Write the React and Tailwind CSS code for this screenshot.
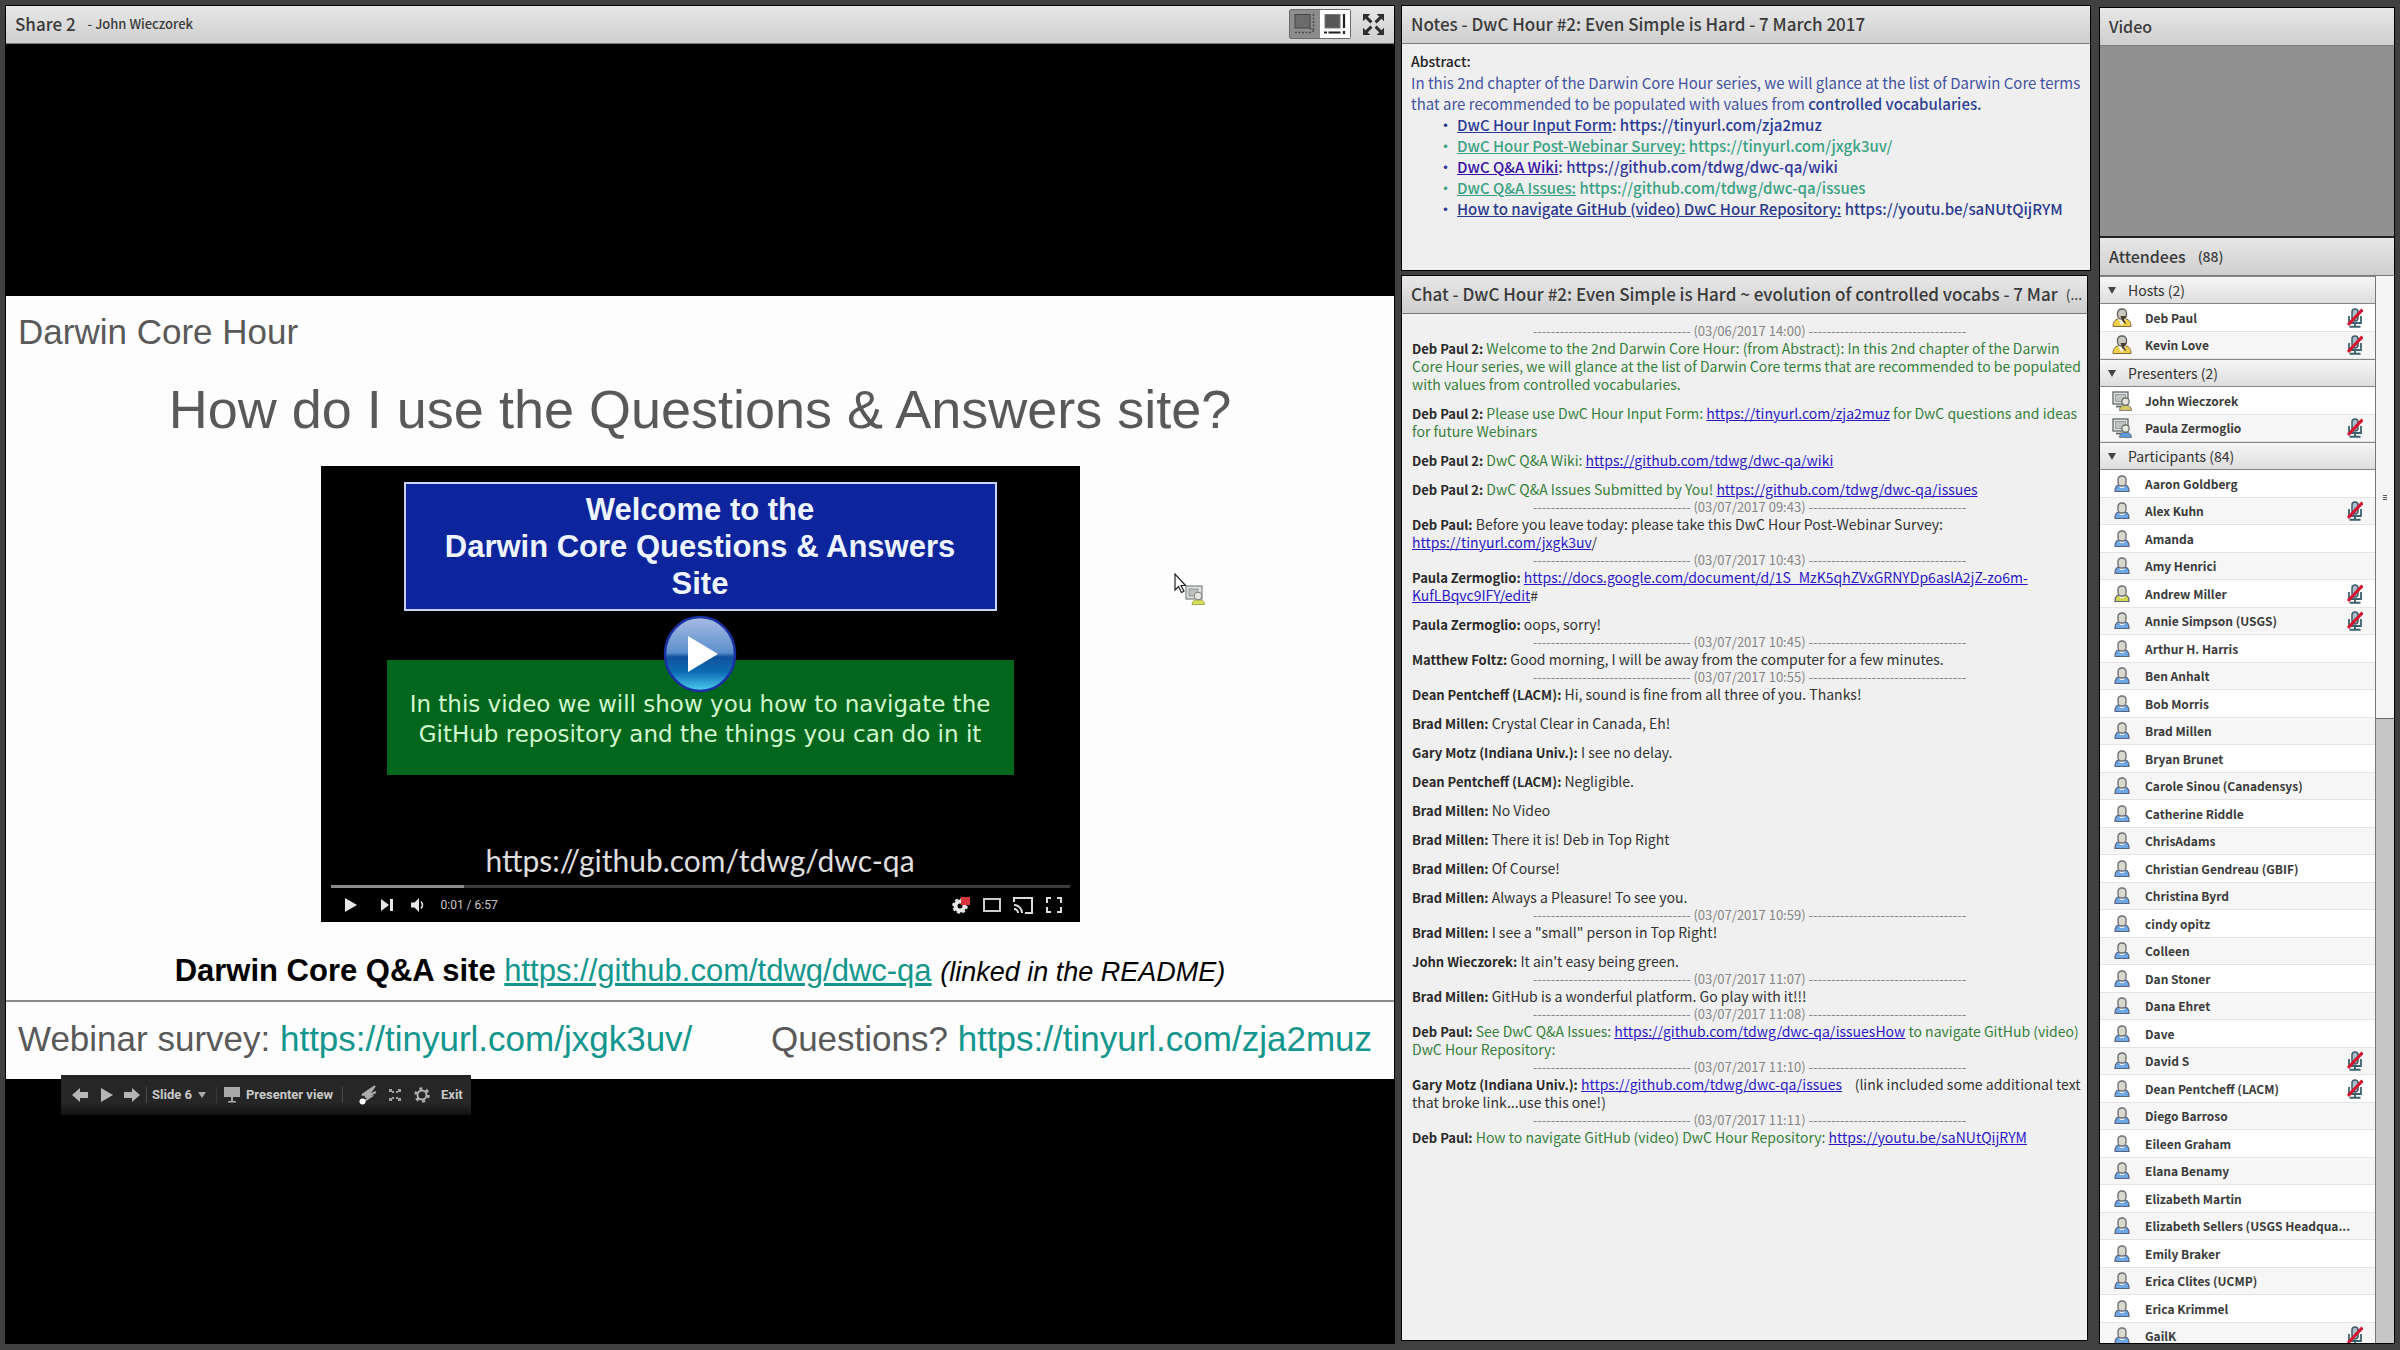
import React from 'react';

const hosts = [
    { name: 'Deb Paul', muted: true },
    { name: 'Kevin Love', muted: true },
];

const presenters = [
    { name: 'John Wieczorek', body: '#d9c86a' },
    { name: 'Paula Zermoglio', muted: true },
];

const participants = [
    { name: 'Aaron Goldberg' },
    { name: 'Alex Kuhn', muted: true },
    { name: 'Amanda' },
    { name: 'Amy Henrici' },
    { name: 'Andrew Miller', muted: true, body: '#d8d84e' },
    { name: 'Annie Simpson (USGS)', muted: true },
    { name: 'Arthur H. Harris' },
    { name: 'Ben Anhalt' },
    { name: 'Bob Morris' },
    { name: 'Brad Millen' },
    { name: 'Bryan Brunet' },
    { name: 'Carole Sinou (Canadensys)' },
    { name: 'Catherine Riddle' },
    { name: 'ChrisAdams' },
    { name: 'Christian Gendreau (GBIF)' },
    { name: 'Christina Byrd' },
    { name: 'cindy opitz' },
    { name: 'Colleen' },
    { name: 'Dan Stoner' },
    { name: 'Dana Ehret' },
    { name: 'Dave' },
    { name: 'David S', muted: true },
    { name: 'Dean Pentcheff (LACM)', muted: true },
    { name: 'Diego Barroso' },
    { name: 'Eileen Graham' },
    { name: 'Elana Benamy' },
    { name: 'Elizabeth Martin' },
    { name: 'Elizabeth Sellers (USGS Headqua...' },
    { name: 'Emily Braker' },
    { name: 'Erica Clites (UCMP)' },
    { name: 'Erica Krimmel' },
    { name: 'GailK', muted: true },
];

const notes = [
    { label: 'DwC Hour Input Form', after: ':', url: 'https://tinyurl.com/zja2muz', tone: 'text-[#2a3b96]' },
    { label: 'DwC Hour Post-Webinar Survey:', url: 'https://tinyurl.com/jxgk3uv/', tone: 'text-[#3aa283]' },
    { label: 'DwC Q&A Wiki', after: ':', url: 'https://github.com/tdwg/dwc-qa/wiki', tone: 'text-[#33379c]', linkTone: 'text-[#3a14a6]' },
    { label: 'DwC Q&A Issues:', url: 'https://github.com/tdwg/dwc-qa/issues', tone: 'text-[#3aa283]' },
    { label: 'How to navigate GitHub (video) DwC Hour Repository:', url: 'https://youtu.be/saNUtQijRYM', tone: 'text-[#2c3a8e]' },
];

const ChatLink = ({ children, wrap = false }) => (
    <a href={children} className={`text-[#2a18c8] underline ${wrap ? '' : 'whitespace-nowrap'}`}>{children}</a>
);

const chat = [
    {
        time: '03/06/2017 14:00',
        messages: [
            { from: 'Deb Paul 2', green: true, text: 'Welcome to the 2nd Darwin Core Hour: (from Abstract): In this 2nd chapter of the Darwin Core Hour series, we will glance at the list of Darwin Core terms that are recommended to be populated with values from controlled vocabularies.' },
            { from: 'Deb Paul 2', green: true, text: <>Please use DwC Hour Input Form: <ChatLink>https://tinyurl.com/zja2muz</ChatLink> for DwC questions and ideas for future Webinars</> },
            { from: 'Deb Paul 2', green: true, text: <>DwC Q&amp;A Wiki: <ChatLink>https://github.com/tdwg/dwc-qa/wiki</ChatLink></> },
            { from: 'Deb Paul 2', green: true, text: <>DwC Q&amp;A Issues Submitted by You! <ChatLink>https://github.com/tdwg/dwc-qa/issues</ChatLink></> },
        ],
    },
    {
        time: '03/07/2017 09:43',
        messages: [
            { from: 'Deb Paul', text: <>Before you leave today: please take this DwC Hour Post-Webinar Survey: <ChatLink>https://tinyurl.com/jxgk3uv</ChatLink>/</> },
        ],
    },
    {
        time: '03/07/2017 10:43',
        messages: [
            { from: 'Paula Zermoglio', text: <><ChatLink wrap>https://docs.google.com/document/d/1S_MzK5qhZVxGRNYDp6aslA2jZ-zo6m-KufLBqvc9IFY/edit</ChatLink>#</> },
            { from: 'Paula Zermoglio', text: 'oops, sorry!' },
        ],
    },
    {
        time: '03/07/2017 10:45',
        messages: [{ from: 'Matthew Foltz', text: 'Good morning, I will be away from the computer for a few minutes.' }],
    },
    {
        time: '03/07/2017 10:55',
        messages: [
            { from: 'Dean Pentcheff (LACM)', text: 'Hi, sound is fine from all three of you. Thanks!' },
            { from: 'Brad Millen', text: 'Crystal Clear in Canada, Eh!' },
            { from: 'Gary Motz (Indiana Univ.)', text: 'I see no delay.' },
            { from: 'Dean Pentcheff (LACM)', text: 'Negligible.' },
            { from: 'Brad Millen', text: 'No Video' },
            { from: 'Brad Millen', text: 'There it is! Deb in Top Right' },
            { from: 'Brad Millen', text: 'Of Course!' },
            { from: 'Brad Millen', text: 'Always a Pleasure! To see you.' },
        ],
    },
    {
        time: '03/07/2017 10:59',
        messages: [
            { from: 'Brad Millen', text: 'I see a "small" person in Top Right!' },
            { from: 'John Wieczorek', text: "It ain't easy being green." },
        ],
    },
    {
        time: '03/07/2017 11:07',
        messages: [{ from: 'Brad Millen', text: 'GitHub is a wonderful platform. Go play with it!!!' }],
    },
    {
        time: '03/07/2017 11:08',
        messages: [
            { from: 'Deb Paul', green: true, text: <>See DwC Q&amp;A Issues: <ChatLink>https://github.com/tdwg/dwc-qa/issuesHow</ChatLink> to navigate GitHub (video) DwC Hour Repository:</> },
        ],
    },
    {
        time: '03/07/2017 11:10',
        messages: [
            { from: 'Gary Motz (Indiana Univ.)', text: <><ChatLink>https://github.com/tdwg/dwc-qa/issues</ChatLink> &nbsp;&nbsp; (link included some additional text that broke link...use this one!)</> },
        ],
    },
    {
        time: '03/07/2017 11:11',
        messages: [
            { from: 'Deb Paul', green: true, text: <>How to navigate GitHub (video) DwC Hour Repository: <ChatLink>https://youtu.be/saNUtQijRYM</ChatLink></> },
        ],
    },
];

const dashes = '-'.repeat(35);

/* ---------- icons ---------- */

const PersonIcon = ({ body = '#6fa8e6' }) => (
    <svg viewBox="0 0 16 18" className="h-[18px] w-4">
        <path d="M1 16.5c0-4 1.5-6 3.6-6.4h6.8c2.1.4 3.6 2.4 3.6 6.4z" fill={body} stroke="#56627e" strokeWidth="1.2" />
        <path d="M5 9.5h6l-1 3.5H6z" fill="#e8eef4" />
        <rect x="4" y="1" width="8" height="10" rx="3.6" fill="#d8d8cc" stroke="#6d6a72" strokeWidth="1.3" />
    </svg>
);

const HostIcon = () => (
    <svg viewBox="0 0 20 20" className="h-5 w-5">
        <path d="M1 18.5c0-4.5 2-7 5-7.5h8c3 .5 5 3 5 7.5z" fill="#f0cf4a" stroke="#7c6a3c" />
        <path d="M6 11l3.5 7 4.5-7z" fill="#f4f0e4" />
        <rect x="5.5" y="1" width="9" height="10" rx="4" fill="#c9c7be" stroke="#5f5d5c" strokeWidth="1.3" />
        <path d="M8.5 8h6l-2.5 3.5 2.5 5-4-3z" fill="#4c3c2c" />
    </svg>
);

const PresenterIcon = ({ body = '#5c97e0' }) => (
    <svg viewBox="0 0 20 20" className="h-5 w-5">
        <rect x="1" y="1" width="15" height="12" fill="#e4e6e4" stroke="#5f6668" strokeWidth="1.3" />
        <rect x="3.5" y="3.5" width="10" height="7" fill="#bfc5c4" stroke="#8b9190" strokeWidth=".8" />
        <path d="M4 15.5h6" stroke="#5f6668" strokeWidth="1.8" />
        <path d="M7.5 19.5c0-3 1.5-4.5 3.5-5h5c2 .5 3.5 2 3.5 5z" fill={body} stroke="#6a705e" strokeWidth=".8" />
        <circle cx="13.5" cy="10.5" r="3.7" fill="#e6e8dc" stroke="#5f645c" strokeWidth="1.2" />
    </svg>
);

const MutedMicIcon = () => (
    <svg viewBox="0 0 16 20" className="h-5 w-4" aria-label="Microphone muted">
        <rect x="5" y="1" width="6" height="12" rx="3" fill="#a9bfca" stroke="#3f5c68" strokeWidth="1.5" />
        <path d="M2 8v7h12V8" fill="none" stroke="#3c626e" strokeWidth="1.8" />
        <path d="M8 15v3.5M2.5 18.8h11" stroke="#3c626e" strokeWidth="1.9" />
        <path d="M1 17L15.5 1.5" stroke="#d3152f" strokeWidth="3.2" />
    </svg>
);

const FitIcon = ({ dark }) => (
    <svg viewBox="0 0 24 22" className="h-[22px] w-6">
        <rect x="2" y="1.5" width="15" height="13.5" fill={dark ? '#6c6c6c' : '#575757'} stroke={dark ? '#444' : '#777'} />
        {dark
            ? <path d="M20.5 1v17M17 15l4 4M2 19.5h16" stroke="#4a4a4a" strokeWidth="1.5" strokeDasharray="2 1.5" />
            : <path d="M21 1v14M21 18v3M1 19.5h3M5.5 19.5h12" stroke="#222" strokeWidth="2.2" />}
    </svg>
);

const FullscreenIcon = () => (
    <svg viewBox="0 0 20 20" className="h-[21px] w-[21px]" fill="#2e2e2e" stroke="#2e2e2e" strokeWidth="2.8">
        <path d="M3 3l5 5M17 3l-5 5M3 17l5-5M17 17l-5-5" />
        <path d="M0 0h7L0 7zM20 0h-7l7 7zM0 20h7l-7-7zM20 20h-7l7-7z" stroke="none" />
    </svg>
);

const PlayBadge = () => (
    <svg viewBox="0 0 74 78" className="h-[78px] w-[74px]">
        <defs>
            <linearGradient id="orbTop" x1="0" y1="0" x2="0" y2="1">
                <stop offset="0%" stopColor="#a9bbe4" />
                <stop offset="48%" stopColor="#5c8fcb" />
                <stop offset="54%" stopColor="#12519c" />
                <stop offset="75%" stopColor="#0d6db4" />
                <stop offset="100%" stopColor="#4fd0f2" />
            </linearGradient>
        </defs>
        <ellipse cx="37" cy="39" rx="35" ry="37" fill="url(#orbTop)" stroke="#1a2fa0" strokeWidth="2.5" />
        <path d="M25 21v36l30-18z" fill="#fff" />
    </svg>
);

const PointerIcon = () => (
    <svg viewBox="0 0 32 34" className="h-[34px] w-8">
        <path d="M1 1v16l3.5-3.5 3 6 2.5-1.2-3-5.8h4.5z" fill="#fff" stroke="#222" strokeWidth="1.2" />
        <rect x="12" y="13" width="16" height="13" fill="#dfe1df" stroke="#6a6e70" />
        <rect x="15" y="16" width="9" height="7" fill="#bcc1c0" stroke="#85898a" strokeWidth=".8" />
        <path d="M18 31.5c0-3 2-4 3.5-4.5h5.5c2 .5 3.5 1.5 3.5 4.5z" fill="#dbe05a" stroke="#8f9446" strokeWidth=".8" />
        <circle cx="24" cy="23" r="3.8" fill="#e8e8e4" stroke="#7b7e7b" />
    </svg>
);

/* ---------- shared pod parts ---------- */

const PodHeader = ({ title, size = 'text-[17px]', children }) => (
    <header className="flex h-[38px] shrink-0 items-center border-b border-[#7a7a7a] bg-linear-to-b from-[#e8e8e8] to-[#cecece] pr-[10px] pb-px pl-[9px] leading-6 text-[#3a3a3a]">
        <h2 className={`font-medium whitespace-nowrap ${size} leading-6`}>{title}</h2>
        {children}
    </header>
);

const VideoFrame = () => (
    <div className="relative mx-auto mt-[26px] flex h-[456px] w-[759px] flex-col items-center bg-black pt-4">
        <div className="w-[593px] border-2 border-[#c9d2ff] bg-[#0c259c] pt-[7px] pb-[7px] text-center text-[31px] leading-[37px] font-bold text-[#eef4ff]">
            Welcome to the<br />Darwin Core Questions &amp; Answers<br />Site
        </div>
        <div className="mt-[49px] h-[115px] w-[627px] bg-[#02671d] pt-[29px] text-center font-['DejaVu_Sans',sans-serif] text-[23px] leading-[30px] text-[#d2f7cf]">
            In this video we will show you how to navigate the<br />GitHub repository and the things you can do in it
        </div>
        <button type="button" aria-label="Play video" className="absolute top-[149px] left-1/2 -translate-x-1/2"><PlayBadge /></button>
        <p className="mt-[67px] font-[Lato,sans-serif] text-[30px] leading-9 text-[#dedede]">https://github.com/tdwg/dwc-qa</p>
        <div className="mt-[7px] h-[3px] w-[739px] bg-[#3c3c3c]">
            <div className="h-full w-[18%] bg-[#8b8b8b]" />
        </div>
        <div className="flex w-full flex-1 items-center pr-[18px] pl-6 text-[#e6e6e6]">
            <button type="button" aria-label="Play"><svg viewBox="0 0 12 14" className="h-[14px] w-3" fill="currentColor"><path d="M0 0v14l12-7z" /></svg></button>
            <button type="button" aria-label="Next" className="ml-6"><svg viewBox="0 0 12 12" className="h-3 w-3" fill="currentColor"><path d="M0 0v12l8-6zM9 0h3v12H9z" /></svg></button>
            <button type="button" aria-label="Volume" className="ml-[18px]">
                <svg viewBox="0 0 14 14" className="h-[14px] w-[14px]" fill="currentColor"><path d="M0 4.5h3.5L8 0v14L3.5 9.5H0z" /><path d="M10 3.5q3 3.5 0 7" fill="none" stroke="currentColor" strokeWidth="1.5" /></svg>
            </button>
            <span className="ml-4 font-[Roboto,sans-serif] text-xs text-[#c8c8c8]">0:01 / 6:57</span>
            <button type="button" aria-label="Settings" className="ml-auto">
                <svg viewBox="0 0 18 18" className="h-[18px] w-[18px]">
                    <circle cx="8" cy="10" r="4.5" fill="none" stroke="#e6e6e6" strokeWidth="4" />
                    <circle cx="8" cy="10" r="6.8" fill="none" stroke="#e6e6e6" strokeWidth="2" strokeDasharray="3 2.34" />
                    <rect x="9" y="1" width="9" height="8" fill="#d7333b" />
                </svg>
            </button>
            <button type="button" aria-label="Theater mode" className="ml-[13px]"><svg viewBox="0 0 18 14" className="h-[14px] w-[18px]"><rect x="1" y="1" width="16" height="12" fill="none" stroke="#ccc" strokeWidth="2" /></svg></button>
            <button type="button" aria-label="Cast" className="ml-3">
                <svg viewBox="0 0 20 17" className="h-[17px] w-5" fill="none" stroke="#ddd" strokeWidth="2"><path d="M1 5V1h18v15h-7M1 8a8 8 0 018 8M1 12a4 4 0 014 4" /></svg>
            </button>
            <button type="button" aria-label="Full screen" className="ml-[13px]"><svg viewBox="0 0 16 16" className="h-4 w-4" fill="none" stroke="#ddd" strokeWidth="2"><path d="M1 6V1h4M11 1h4v5M15 10v5h-4M5 15H1v-5" /></svg></button>
        </div>
    </div>
);

const SlideToolbar = () => (
    <nav className="relative -mt-1 ml-[55px] flex h-10 w-fit items-center bg-linear-to-b from-[#262626] from-70% to-[#111] pr-2 pl-[11px] font-[Roboto,sans-serif] text-[13px] font-bold text-[#c9c9c9]">
        <button type="button" aria-label="Previous slide"><svg viewBox="0 0 16 14" className="h-[14px] w-4" fill="#b5b5b5"><path d="M0 7l8-7v4h8v6H8v4z" /></svg></button>
        <button type="button" aria-label="Play" className="ml-[13px]"><svg viewBox="0 0 12 14" className="h-[14px] w-3" fill="#b5b5b5"><path d="M0 0v14l12-7z" /></svg></button>
        <button type="button" aria-label="Next slide" className="ml-[11px]"><svg viewBox="0 0 16 14" className="h-[14px] w-4" fill="#b5b5b5"><path d="M16 7L8 0v4H0v6h8v4z" /></svg></button>
        <span className="ml-[6px] h-4 w-px bg-[#4a4a4a]" />
        <button type="button" className="ml-[5px] flex items-center gap-[6px]">
            Slide 6
            <svg viewBox="0 0 8 6" className="h-[6px] w-2" fill="#aaa"><path d="M0 0h8L4 6z" /></svg>
        </button>
        <span className="ml-[10px] h-4 w-px bg-[#3a3a3a]" />
        <button type="button" className="ml-[7px] flex items-center gap-[6px]">
            <svg viewBox="0 0 16 16" className="h-4 w-4" fill="#a9a9a9"><path d="M0 0h16v10H0zM7 10h2v4H7zM4 14h8v1.5H4z" /></svg>
            Presenter view
        </button>
        <span className="ml-[9px] h-4 w-px bg-[#4a4a4a]" />
        <button type="button" aria-label="Laser pointer" className="ml-4">
            <svg viewBox="0 0 18 20" className="h-5 w-[18px]"><path d="M16 1L3 10l7-1zM17 7L6 12l6-.5L4 17" fill="#aaa" stroke="#aaa" strokeWidth="2" /><circle cx="3.5" cy="16.5" r="3" fill="#fff" /></svg>
        </button>
        <button type="button" aria-label="Exit full screen" className="ml-3">
            <svg viewBox="0 0 12 12" className="h-3 w-3" fill="#a2a2a2"><path d="M0 0h3v3H0zM3 2h2v2H3zM9 0h3v3H9zM7 2h2v2H7zM0 9h3v3H0zM3 8h2v2H3zM9 9h3v3H9zM7 8h2v2H7z" /></svg>
        </button>
        <button type="button" aria-label="Slide options" className="ml-[13px]">
            <svg viewBox="0 0 16 16" className="h-4 w-4" fill="none" stroke="#b0b0b0"><circle cx="8" cy="8" r="4.5" strokeWidth="2" /><circle cx="8" cy="8" r="6.5" strokeWidth="2.5" strokeDasharray="3 3.8" /></svg>
        </button>
        <button type="button" className="ml-[11px]">Exit</button>
    </nav>
);

const SharePod = () => (
    <section className="flex min-w-0 flex-col overflow-hidden bg-black outline outline-black">
        <PodHeader title="Share 2">
            <span className="ml-3 text-[13px] font-medium">- John Wieczorek</span>
            <div className="ml-auto flex rounded-[2px] border border-[#6a6a6a]">
                <button type="button" aria-label="Fit to window" className="flex h-7 w-[30px] items-center justify-center bg-[#8d8d8d]"><FitIcon dark /></button>
                <button type="button" aria-label="Actual size" className="flex h-7 w-[30px] items-center justify-center bg-white"><FitIcon /></button>
            </div>
            <button type="button" aria-label="Full screen" className="ml-3"><FullscreenIcon /></button>
        </PodHeader>
        <div className="flex-[252]" />
        <article className="relative bg-[#fdfdfd] font-['Liberation_Sans',sans-serif] text-[#595959]">
            <p className="pt-4 pl-3 text-[35px] leading-10">Darwin Core Hour</p>
            <h1 className="mt-[26px] text-center text-[54px] leading-[62px]">How do I use the Questions &amp; Answers site?</h1>
            <VideoFrame />
            <p className="mt-[31px] text-center text-[31px] leading-9 text-black">
                <b>Darwin Core Q&amp;A site</b>{' '}
                <a href="https://github.com/tdwg/dwc-qa" className="text-[#12968d] underline">https://github.com/tdwg/dwc-qa</a>{' '}
                <i className="text-[27px]">(linked in the README)</i>
            </p>
            <footer className="mt-[10px] flex justify-between border-t-2 border-[#8a8a8a] pt-[17px] pr-[22px] pb-5 pl-3 text-[35px] leading-10">
                <span>Webinar survey: <a href="https://tinyurl.com/jxgk3uv/" className="text-[#12968d]">https://tinyurl.com/jxgk3uv/</a></span>
                <span>Questions? <a href="https://tinyurl.com/zja2muz" className="text-[#12968d]">https://tinyurl.com/zja2muz</a></span>
            </footer>
            <span className="absolute top-[277px] left-[1168px]"><PointerIcon /></span>
        </article>
        <div className="flex-[264]"><SlideToolbar /></div>
    </section>
);

const NotesPod = () => (
    <section className="h-[264px] shrink-0 overflow-hidden bg-[#efefef] outline outline-black">
        <PodHeader title="Notes - DwC Hour #2: Even Simple is Hard - 7 March 2017" />
        <div className="pt-[7px] pl-[9px] text-[15px] leading-[21px] text-[#4453a2]">
            <p className="text-sm leading-[21px] font-medium text-[#222]">Abstract:</p>
            <p>In this 2nd chapter of the Darwin Core Hour series, we will glance at the list of Darwin Core terms that are recommended to be populated with values from <b className="font-medium text-[#2c3f94]">controlled vocabularies.</b></p>
            <ul className="pl-[27px] font-medium whitespace-nowrap">
                {notes.map((n) => (
                    <li key={n.url} className={`before:inline-block before:w-[19px] before:leading-none before:content-['•'] ${n.tone}`}>
                        <a href={n.url} className={`underline ${n.linkTone || ''}`}>{n.label}</a>{n.after} {n.url}
                    </li>
                ))}
            </ul>
        </div>
    </section>
);

const ChatPod = () => (
    <section className="mr-[3px] mb-[3px] flex min-h-0 flex-1 flex-col overflow-hidden bg-[#f0f0f0] outline outline-black">
        <PodHeader title="Chat - DwC Hour #2: Even Simple is Hard ~ evolution of controlled vocabs - 7 Mar">
            <span className="ml-2 text-sm">(...</span>
        </PodHeader>
        <div className="pt-2 pl-[10px] text-sm leading-[18px] text-[#333]">
            {chat.map((group) => (
                <div key={group.time}>
                    <p className="text-center text-[13px] leading-[17px] whitespace-nowrap text-[#858585]">{dashes} ({group.time}) {dashes}</p>
                    <ul className="flex flex-col gap-[11px] pr-1">
                        {group.messages.map((m, i) => (
                            <li key={i} className={m.green ? 'text-[#37803c]' : ''}>
                                <b className="text-[13px] leading-none text-[#2a2a2a]">{m.from}:</b> {m.text}
                            </li>
                        ))}
                    </ul>
                </div>
            ))}
        </div>
    </section>
);

const AttendeeGroup = ({ label, count, people, Icon }) => (
    <section>
        <button type="button" className="flex h-7 w-full items-center gap-3 border-y border-[#858585] bg-linear-to-b from-[#f6f6f6] to-[#dedede] pl-2 text-sm text-[#333]">
            <svg viewBox="0 0 8 7" className="h-[7px] w-2" fill="#444"><path d="M0 0h8L4 7z" /></svg>
            {label} ({count})
        </button>
        <ul>
            {people.map((p) => (
                <li key={p.name} className="flex h-7 items-center border-b border-[#e4e4e4] pr-3 pl-3 text-xs font-bold text-[#3a3a3a] odd:bg-white even:h-[27px] even:bg-[#f6f6f6]">
                    <span className="flex w-5 justify-center"><Icon body={p.body} /></span>
                    <span className="ml-[13px] flex-1 whitespace-nowrap">{p.name}</span>
                    {p.muted && <MutedMicIcon />}
                </li>
            ))}
        </ul>
    </section>
);

export default function App() {
    return (
        <main className="grid h-screen grid-cols-[1388fr_688fr_296fr] gap-x-2 overflow-hidden bg-[#404040] px-[6px] pt-[6px] pb-[7px] font-['Noto_Sans_CJK_SC','Open_Sans',sans-serif]">
            <SharePod />
            <div className="flex min-h-0 min-w-0 flex-col gap-[6px]">
                <NotesPod />
                <ChatPod />
            </div>
            <div className="mt-[2px] ml-[2px] flex min-h-0 min-w-0 flex-col gap-[2px] bg-[#222] outline outline-black">
                <section>
                    <PodHeader title="Video" size="text-base" />
                    <div className="h-[190px] bg-[#919191]" />
                </section>
                <section className="flex min-h-0 flex-1 flex-col bg-white">
                    <PodHeader title="Attendees" size="text-base"><span className="ml-3 text-sm font-medium">(88)</span></PodHeader>
                    <div className="flex min-h-0 flex-1">
                        <div className="min-w-0 flex-1 overflow-hidden">
                            <AttendeeGroup label="Hosts" count={2} people={hosts} Icon={HostIcon} />
                            <AttendeeGroup label="Presenters" count={2} people={presenters} Icon={PresenterIcon} />
                            <AttendeeGroup label="Participants" count={84} people={participants} Icon={PersonIcon} />
                        </div>
                        {/* scroll track */}
                        <div className="w-[19px] border-l border-[#777] bg-[#c6c6c6]">
                            <div className="flex h-[443px] flex-col items-center justify-center gap-px border-b border-[#666] bg-[#f5f5f5]">
                                <span className="h-px w-1 bg-[#555]" />
                                <span className="h-px w-1 bg-[#555]" />
                                <span className="h-px w-1 bg-[#555]" />
                            </div>
                        </div>
                    </div>
                </section>
            </div>
        </main>
    );
}
